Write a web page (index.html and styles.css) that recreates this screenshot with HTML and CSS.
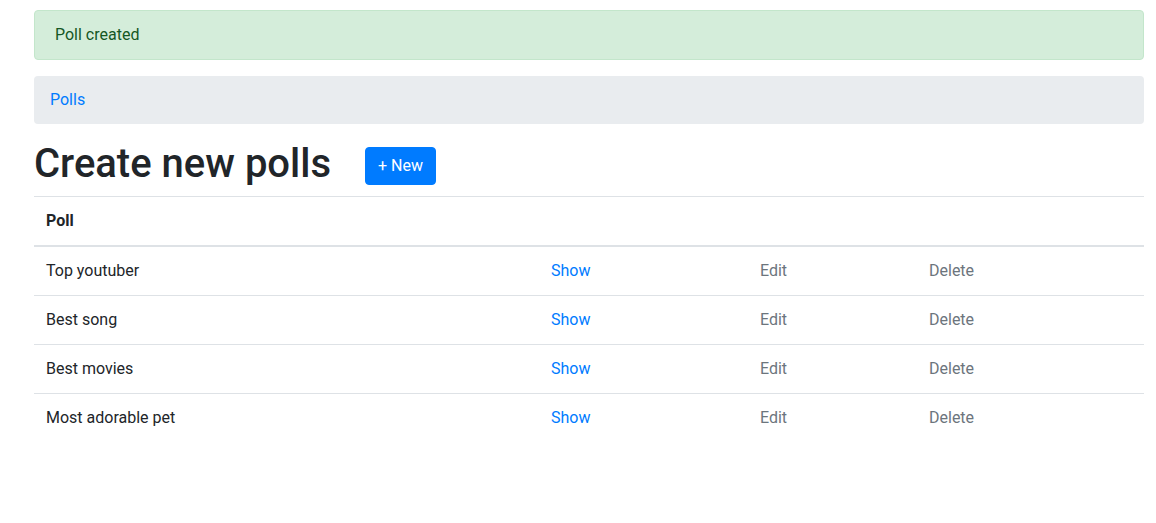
FILE: index.html
```html
<!DOCTYPE html>
<html lang="en">
<head>
<meta charset="utf-8">
<title>Polls</title>
<link rel="stylesheet" href="styles.css">
</head>
<body>
<div class="container">
  <div class="alert">Poll created</div>
  <nav class="breadcrumb"><a href="#">Polls</a></nav>
  <div class="title-row">
    <h1 class="title">Create new polls</h1>
    <a class="btn" href="#">+ New</a>
  </div>
  <table class="table">
    <thead>
      <tr><th class="c1">Poll</th><th class="c2"></th><th class="c3"></th><th class="c4"></th></tr>
    </thead>
    <tbody>
      <tr><td>Top youtuber</td><td><a class="link" href="#">Show</a></td><td><a class="muted" href="#">Edit</a></td><td><a class="muted" href="#">Delete</a></td></tr>
      <tr><td>Best song</td><td><a class="link" href="#">Show</a></td><td><a class="muted" href="#">Edit</a></td><td><a class="muted" href="#">Delete</a></td></tr>
      <tr><td>Best movies</td><td><a class="link" href="#">Show</a></td><td><a class="muted" href="#">Edit</a></td><td><a class="muted" href="#">Delete</a></td></tr>
      <tr><td>Most adorable pet</td><td><a class="link" href="#">Show</a></td><td><a class="muted" href="#">Edit</a></td><td><a class="muted" href="#">Delete</a></td></tr>
    </tbody>
  </table>
</div>
</body>
</html>
```
FILE: styles.css
```css
* { box-sizing: border-box; }
html, body { margin: 0; padding: 0; background: #fff; }
body {
  font-family: Roboto, "Liberation Sans", Arial, sans-serif;
  font-size: 16px;
  line-height: 24px;
  color: #212529;
}
a { text-decoration: none; }
.container {
  width: 1110px;
  margin-left: 34px;
  padding-top: 10px;
}
.alert {
  background: #d4edda;
  border: 1px solid #c3e6cb;
  color: #155724;
  border-radius: 4px;
  padding: 12px 20px;
  margin-bottom: 16px;
}
.breadcrumb {
  background: #e9ecef;
  border-radius: 4px;
  padding: 12px 16px;
  margin-bottom: 16px;
}
.breadcrumb a { color: #007bff; }
.title-row {
  display: flex;
  align-items: flex-start;
  margin-bottom: 8px;
}
.title {
  margin: 0;
  font-size: 40px;
  line-height: 48px;
  font-weight: 500;
}
.btn {
  display: inline-block;
  margin-left: 34px;
  margin-top: 7px;
  background: #007bff;
  border: 1px solid #007bff;
  color: #fff;
  border-radius: 4px;
  padding: 6px 12px;
  font-size: 16px;
  line-height: 24px;
}
.table {
  width: 100%;
  border-collapse: collapse;
}
.table th, .table td {
  padding: 12px;
  text-align: left;
  vertical-align: top;
  border-top: 1px solid #dee2e6;
  line-height: 24px;
}
.table th { font-weight: 700; }
.table thead th { border-bottom: 2px solid #dee2e6; }
.c1 { width: 505px; }
.c2 { width: 209px; }
.c3 { width: 169px; }
.c4 { width: 227px; }
.link { color: #007bff; }
.muted { color: #6c757d; }
```
